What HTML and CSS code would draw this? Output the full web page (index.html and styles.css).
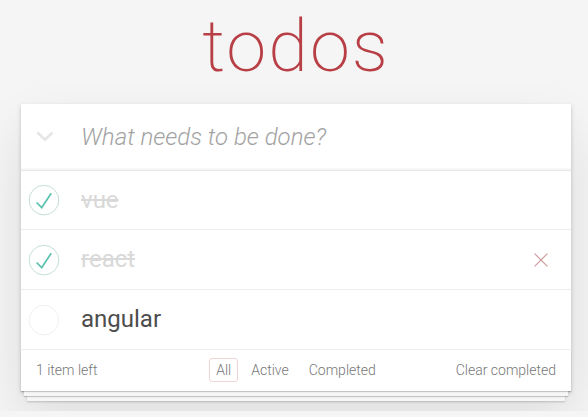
FILE: index.html
```html
<!DOCTYPE html>
<html lang="en">
<head>
<meta charset="utf-8">
<title>todos</title>
<link rel="stylesheet" href="styles.css">
</head>
<body>
<section class="todoapp">
  <h1 class="title">todos</h1>
  <div class="card">
    <header class="header">
      <span class="toggle-all">
        <svg width="18" height="11" viewBox="0 0 18 11"><path d="M1.5 1.5 L9 8.8 L16.5 1.5" fill="none" stroke="#e6e6e6" stroke-width="2.6"/></svg>
      </span>
      <input class="new-todo" type="text" placeholder="What needs to be done?">
    </header>
    <ul class="todo-list">
      <li class="todo completed">
        <svg class="check" width="40" height="40" viewBox="-10 -18 100 135"><circle cx="50" cy="50" r="50" fill="none" stroke="#bddad5" stroke-width="3"/><path fill="#5dc2af" d="M72 25L42 71 27 56l-4 4 20 20 34-52z"/></svg>
        <label class="label">vue</label>
      </li>
      <li class="todo completed">
        <svg class="check" width="40" height="40" viewBox="-10 -18 100 135"><circle cx="50" cy="50" r="50" fill="none" stroke="#bddad5" stroke-width="3"/><path fill="#5dc2af" d="M72 25L42 71 27 56l-4 4 20 20 34-52z"/></svg>
        <label class="label">react</label>
        <span class="destroy"><svg width="14" height="14" viewBox="0 0 14 14"><path d="M0.6 0.6 L13.4 13.4 M13.4 0.6 L0.6 13.4" stroke="#cc9a9a" stroke-width="1.2" fill="none"/></svg></span>
      </li>
      <li class="todo">
        <svg class="check" width="40" height="40" viewBox="-10 -18 100 135"><circle cx="50" cy="50" r="50" fill="none" stroke="#ededed" stroke-width="3"/></svg>
        <label class="label">angular</label>
      </li>
    </ul>
    <footer class="footer">
      <span class="count">1 item left</span>
      <ul class="filters">
        <li><a class="filter selected">All</a></li>
        <li><a class="filter">Active</a></li>
        <li><a class="filter">Completed</a></li>
      </ul>
      <span class="clear">Clear completed</span>
    </footer>
  </div>
</section>
</body>
</html>
```
FILE: styles.css
```css
html, body {
  margin: 0;
  padding: 0;
}
body {
  background: #f5f5f5;
  font-family: Roboto, "Helvetica Neue", Helvetica, Arial, sans-serif;
  font-weight: 300;
  color: #4d4d4d;
  padding-left: 4px;
  -webkit-font-smoothing: antialiased;
}
.todoapp {
  max-width: 550px;
  margin: 0 auto;
  padding-bottom: 20px;
}
.title {
  margin: 0 0 11px;
  height: 93px;
  line-height: 93px;
  font-size: 72px;
  letter-spacing: 2px;
  font-weight: 200;
  text-align: center;
  color: #b83f45;
}
.card {
  background: #fff;
  box-shadow: 0 2px 4px 0 rgba(0,0,0,0.2), 0 25px 50px 0 rgba(0,0,0,0.1);
}
.header {
  display: flex;
  align-items: center;
  box-shadow: inset 0 -2px 1px rgba(0,0,0,0.03);
}
.toggle-all {
  width: 48px;
  display: flex;
  justify-content: center;
  align-items: center;
}
.toggle-all svg {
  display: block;
}
.new-todo {
  flex: 1;
  min-width: 0;
  border: 0;
  outline: none;
  background: transparent;
  padding: 16px 16px 16px 12px;
  font-family: inherit;
  font-size: 24px;
  font-weight: 300;
  line-height: 33.6px;
  height: 65.6px;
  box-sizing: border-box;
  color: #4d4d4d;
}
.new-todo::placeholder {
  font-style: italic;
  font-weight: 300;
  color: #a3a3a3;
}
.todo-list {
  margin: 0;
  padding: 0;
  list-style: none;
  border-top: 1px solid #e6e6e6;
}
.todo {
  display: flex;
  align-items: center;
  border-bottom: 1px solid #ededed;
  font-size: 24px;
}
.check {
  display: block;
  flex: none;
}
.label {
  flex: 1;
  padding: 15px 15px 15px 20px;
  line-height: 1.2;
  color: #4d4d4d;
  font-weight: 400;
}
.completed .label {
  color: #d9d9d9;
  text-decoration: line-through;
}
.destroy {
  width: 40px;
  height: 40px;
  margin-right: 10px;
  display: flex;
  align-items: center;
  justify-content: center;
}
.destroy svg {
  display: block;
}
.footer {
  display: grid;
  grid-template-columns: 1fr auto 1fr;
  align-items: center;
  height: 41px;
  box-sizing: border-box;
  padding: 0 15px;
  color: #777;
  font-size: 14px;
  box-shadow: 0 1px 1px rgba(0,0,0,0.2), 0 8px 0 -3px #f6f6f6, 0 9px 1px -3px rgba(0,0,0,0.2), 0 16px 0 -6px #f6f6f6, 0 17px 2px -6px rgba(0,0,0,0.2);
}
.count {
  justify-self: start;
}
.filters {
  display: flex;
  margin: 0;
  padding: 0;
  list-style: none;
}
.filter {
  display: block;
  margin: 3px;
  padding: 3px 6px;
  border: 1px solid transparent;
  border-radius: 3px;
  color: inherit;
}
.filter.selected {
  border-color: rgba(175,47,47,0.2);
}
.clear {
  justify-self: end;
}
```
